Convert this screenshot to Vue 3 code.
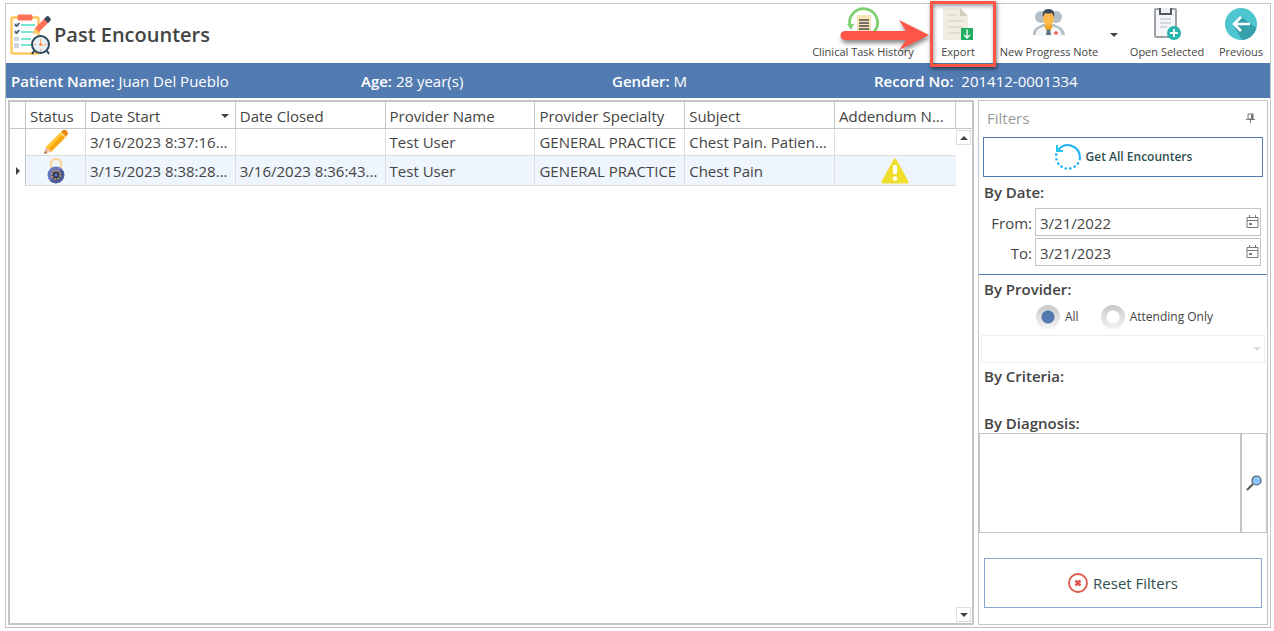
<script setup>
import { ref } from 'vue'

const patient = [
  { label: 'Patient Name:', value: 'Juan Del Pueblo' },
  { label: 'Age:', value: '28 year(s)' },
  { label: 'Gender:', value: 'M' },
  { label: 'Record No:', value: '\u00a0201412-0001334' },
]

const rows = [
  { status: 'open', start: '3/16/2023 8:37:16...', closed: '', provider: 'Test User', specialty: 'GENERAL PRACTICE', subject: 'Chest Pain. Patien...', addendum: false },
  { status: 'locked', start: '3/15/2023 8:38:28...', closed: '3/16/2023 8:36:43...', provider: 'Test User', specialty: 'GENERAL PRACTICE', subject: 'Chest Pain', addendum: true },
]

const selected = ref(1)
const from = ref('3/21/2022')
const to = ref('3/21/2023')
const scope = ref('all')
const diagnosis = ref('')
</script>

<template>
  <main class="window">
    <header class="header">
      <svg class="logo" viewBox="0 0 42 42" aria-hidden="true">
        <rect x="1.5" y="3.5" width="27" height="36" rx="1" fill="#fff" stroke="#fdc75b" stroke-width="2.4" />
        <rect x="7.500" y="0.500" width="15" height="6" rx="1.500" fill="#ff7058" />
        <g fill="#cdd6e0">
          <rect x="4" y="9" width="5" height="4" /><rect x="4" y="16" width="5" height="4" />
          <rect x="4" y="23" width="5" height="4" /><rect x="4" y="29" width="5" height="5" />
        </g>
        <path d="M5 10.500l1.500 1.500 3-3M5 17.500l1.500 1.500 3-3" fill="none" stroke="#324a5e" stroke-width="1.300" />
        <path d="M11 11h14M11 18h12M11 25h10M11 31h10" stroke="#4cdbc4" stroke-width="1.600" />
        <path d="M23 20l2-6 10-10 4 4-10 10z" fill="#ff7058" />
        <path d="M23 20l2-6 4 4z" fill="#ffd15c" />
        <path d="M34 5l3-3q3 0 4 4l-3 3z" fill="#324a5e" />
        <path d="M24 37l-2 3M37 37l2 3" stroke="#324a5e" stroke-width="2" />
        <circle cx="30.500" cy="30.500" r="8.500" fill="#e6f0f7" stroke="#324a5e" stroke-width="2" />
        <path d="M30.500 25v6h4" fill="none" stroke="#ffb347" stroke-width="1.200" />
        <g fill="#ff7058"><circle cx="30.500" cy="30.500" r="1.300" /><circle cx="25" cy="30.500" r=".7" /><circle cx="36" cy="30.500" r=".7" /><circle cx="30.500" cy="36" r=".7" /></g>
      </svg>
      <h1>Past Encounters</h1>

      <nav class="toolbar" aria-label="Encounter actions">
        <button class="tool history" type="button">
          <svg viewBox="0 0 32 34" aria-hidden="true">
            <rect x="10" y="8" width="14" height="18" fill="#fbe3b8" />
            <path d="M12 13h10M12 16h10M12 19h10M12 22h10" stroke="#4c4c4c" stroke-width="1.300" />
            <path d="M3 19A14 14 0 1 1 27 25" fill="none" stroke="#7ed070" stroke-width="2.800" />
            <path d="M0 17h7l-3 6z" fill="#7ed070" />
          </svg>
          <span>Clinical Task History</span>
        </button>
        <button class="tool export" type="button">
          <svg viewBox="0 0 32 34" aria-hidden="true">
            <path d="M1 1h17l8 8v24H1z" fill="#f0ede0" />
            <path d="M18 1l8 8h-8z" fill="#d3cfbb" />
            <path d="M6 8h8M6 14h15M6 20h15M6 26h12" stroke="#d5d1bf" stroke-width="1.200" />
            <rect x="19" y="21" width="12" height="12" fill="#22ae60" />
            <path d="M25 22.500v8M22 28l3 3 3-3" fill="none" stroke="#fff" stroke-width="1.300" />
          </svg>
          <span>Export</span>
          <i class="highlight"></i>
          <svg class="pointer" viewBox="0 0 92 36" aria-hidden="true">
            <path d="M6 13H67L60 2 90 17 60 32 67 22H6A4.500 4.500 0 0 1 6 13z" fill="#ff5547" />
          </svg>
        </button>
        <button class="tool progress" type="button">
          <svg viewBox="0 0 34 34" aria-hidden="true">
            <g fill="#b4bec7">
              <circle cx="9" cy="10" r="6" /><circle cx="24" cy="10" r="6" />
              <path d="M1 28q0-7 6-9l4-2h11l4 2q6 2 7 9z" />
            </g>
            <path d="M3 29q1-8 8-9l2-1h7l2 1q7 1 8 9z" fill="#f4f6f8" />
            <path d="M12 19l4.500 8 4.500-8z" fill="#f6a623" />
            <path d="M15 22h3l1 6h-5z" fill="#5d7380" />
            <path d="M13.500 14h6v6l-3 3-3-3z" fill="#f6a623" />
            <ellipse cx="16.500" cy="11.500" rx="5.500" ry="7" fill="#fdb94c" />
            <path d="M11 10Q9.500 2 16.500 2 23.500 2 22 10L20 6q-4 1-7 0z" fill="#3b4a57" />
            <path d="M22 26h4M24 24v4" stroke="#f2574b" stroke-width="1.400" />
          </svg>
          <span>New Progress Note</span>
        </button>
        <button class="more" type="button" aria-label="More note types"><i class="caret"></i></button>
        <button class="tool open" type="button">
          <svg viewBox="0 0 32 34" aria-hidden="true">
            <rect x="4" y="2" width="21" height="28" rx="1" fill="#f5f6f7" stroke="#9da1a5" stroke-width="2" />
            <path d="M9 1v6h11V1" fill="#eef0f1" stroke="#53585c" stroke-width="2" />
            <path d="M9 12h11M9 16h11M9 20h7" stroke="#b8bcc0" stroke-width="1.200" />
            <circle cx="23" cy="26" r="7" fill="#27b5ae" />
            <path d="M23 22v8M19 26h8" stroke="#fff" stroke-width="1.800" />
          </svg>
          <span>Open Selected</span>
        </button>
        <button class="tool previous" type="button">
          <svg viewBox="0 0 34 34" aria-hidden="true">
            <circle cx="17" cy="17" r="16" fill="#4fc5cf" />
            <path d="M17 10l15.500 11Q29 32 18 33L9 17z" fill="#359faa" />
            <path d="M26 17H10M17 10l-7 7 7 7" fill="none" stroke="#fff" stroke-width="2.600" />
          </svg>
          <span>Previous</span>
        </button>
      </nav>
    </header>

    <section class="patient">
      <div v-for="p in patient" :key="p.label"><b>{{ p.label }}</b> {{ p.value }}</div>
    </section>

    <div class="content">
      <section class="grid">
        <table>
          <colgroup>
            <col class="c-mark" /><col class="c-status" /><col /><col /><col /><col /><col /><col class="c-add" />
          </colgroup>
          <thead>
            <tr>
              <th></th>
              <th>Status</th>
              <th><div class="sort">Date Start<i class="caret"></i></div></th>
              <th>Date Closed</th>
              <th>Provider Name</th>
              <th>Provider Specialty</th>
              <th>Subject</th>
              <th>Addendum N...</th>
            </tr>
          </thead>
          <tbody>
            <tr v-for="(r, i) in rows" :key="i" :class="{ active: selected === i }" @click="selected = i">
              <td class="mark"><i v-if="selected === i" class="arrow"></i></td>
              <td class="icon">
                <svg v-if="r.status === 'open'" width="26" height="26" viewBox="0 0 26 26" role="img" aria-label="Open">
                  <path d="M1 25l2-7 4 5z" fill="#e8b79c" /><path d="M1 25l1-3 2 2z" fill="#b3654c" />
                  <path d="M3 18L18 3l5 5L8 23z" fill="#f7a80d" /><path d="M3 18L18 3l2 2L5 20z" fill="#fec935" />
                  <path d="M18 3l2-2q4-1 5 4l-2 3z" fill="#e78a10" /><path d="M17 4l1-1 5 5-1 1z" fill="#ffe28b" />
                </svg>
                <svg v-else width="20" height="26" viewBox="0 0 20 26" role="img" aria-label="Locked">
                  <path d="M5 12V6q0-5 5-5t5 5v6" fill="none" stroke="#fbd394" stroke-width="2" />
                  <circle cx="10" cy="17" r="8.500" fill="#6978be" />
                  <path d="M16 11A8.500 8.500 0 0 1 4 23z" fill="#4b5a94" />
                  <circle cx="10" cy="17" r="4.200" fill="#2b3c5c" stroke="#c99b52" stroke-width="1.600" stroke-dasharray="2 1.300" />
                  <circle cx="10" cy="17" r="1.400" fill="#6978be" />
                </svg>
              </td>
              <td>{{ r.start }}</td>
              <td>{{ r.closed }}</td>
              <td>{{ r.provider }}</td>
              <td>{{ r.specialty }}</td>
              <td>{{ r.subject }}</td>
              <td class="icon last">
                <svg v-if="r.addendum" width="28" height="26" viewBox="0 0 28 26" role="img" aria-label="Has addendum">
                  <path d="M14 2L26 24H2z" fill="#f0df2e" stroke="#f0df2e" stroke-width="3" stroke-linejoin="round" />
                  <rect x="12" y="7" width="4" height="9" rx="1" fill="#fff" /><circle cx="14" cy="20.500" r="2.300" fill="#fff" />
                </svg>
              </td>
            </tr>
          </tbody>
        </table>
        <div class="side">
          <div class="corner"></div>
          <div class="scroll">
            <button type="button" aria-label="Scroll up"><i class="caret up"></i></button>
            <button type="button" aria-label="Scroll down"><i class="caret"></i></button>
          </div>
        </div>
      </section>

      <aside class="filters">
        <div class="title">
          <h2>Filters</h2>
          <button type="button" aria-label="Pin panel">
            <svg width="9" height="10" viewBox="0 0 9 10"><path d="M2 1h5v5H2z" fill="none" stroke="#777" /><path d="M5 1h2v5H5zM0 6h9v1H0zM4 7h1v3H4z" fill="#777" /></svg>
          </button>
        </div>
        <button class="all" type="button">
          <svg width="28" height="28" viewBox="0 0 28 28" aria-hidden="true">
            <path d="M5 6Q11 0 18 3q8 3 8 12" fill="none" stroke="#1db0f6" stroke-width="2" />
            <path d="M26 15A12 12 0 1 1 3 9" fill="none" stroke="#1db0f6" stroke-width="2.200" stroke-dasharray="2.400 2.200" />
            <path d="M3 2v6h6" fill="none" stroke="#26c6f2" stroke-width="2" /><path d="M3 4v4h5z" fill="#26c6f2" />
          </svg>
          Get All Encounters
        </button>

        <h3 class="by-date">By Date:</h3>
        <div class="dates">
          <label for="from">From:</label>
          <div class="date">
            <input id="from" v-model="from" type="text" />
            <button type="button" aria-label="Choose start date">
              <svg width="13" height="14" viewBox="0 0 13 14"><path d="M1 2.500h11v10H1zM1 5.500h11M3.500 0v3M9.500 0v3" fill="none" stroke="#777" /><path d="M3 8h3v2H3z" fill="#777" /></svg>
            </button>
          </div>
          <label for="to">To:</label>
          <div class="date">
            <input id="to" v-model="to" type="text" />
            <button type="button" aria-label="Choose end date">
              <svg width="13" height="14" viewBox="0 0 13 14"><path d="M1 2.500h11v10H1zM1 5.500h11M3.500 0v3M9.500 0v3" fill="none" stroke="#777" /><path d="M3 8h3v2H3z" fill="#777" /></svg>
            </button>
          </div>
        </div>

        <h3 class="by-provider">By Provider:</h3>
        <div class="radios">
          <label><input v-model="scope" type="radio" name="scope" value="all" />All</label>
          <label><input v-model="scope" type="radio" name="scope" value="attending" />Attending Only</label>
        </div>
        <div class="provider">
          <select aria-label="Provider" disabled><option></option></select>
          <i class="caret"></i>
        </div>

        <h3 class="by-criteria">By Criteria:</h3>
        <h3 class="by-diagnosis"><label for="diagnosis">By Diagnosis:</label></h3>
        <div class="diagnosis">
          <textarea id="diagnosis" v-model="diagnosis"></textarea>
          <button type="button" aria-label="Search diagnosis">
            <svg width="16" height="16" viewBox="0 0 16 16"><path d="M1 15l6-6" stroke="#555" stroke-width="2" /><circle cx="10.500" cy="5.500" r="4.500" fill="#8fc4ff" stroke="#4a5668" stroke-width="1.200" /></svg>
          </button>
        </div>
        <button class="reset" type="button">
          <svg width="20" height="20" viewBox="0 0 20 20" aria-hidden="true"><circle cx="10" cy="10" r="9" fill="none" stroke="#e2574c" stroke-width="1.800" /><path d="M7.500 7.500l5 5M12.500 7.500l-5 5" stroke="#e2574c" stroke-width="2.600" /></svg>
          Reset Filters
        </button>
      </aside>
    </div>
  </main>
</template>

<style>
body { margin: 0; background: #fff; }
#app { display: flex; min-height: 100vh; }
</style>

<style scoped>
* { box-sizing: border-box; }
h1, h2, h3 { margin: 0; font-weight: 600; }
button { margin: 0; padding: 0; border: 0; background: none; font: inherit; color: inherit; }
svg { display: block; }
.window {
  flex: 1; display: flex; flex-direction: column; min-width: 0;
  margin: 3px 3px 3px 5px; border: 1px solid #c5c5c5;
  font-family: "Open Sans", "Noto Sans", sans-serif; font-size: 15px; line-height: 20px; color: #444;
}
.header { display: flex; align-items: center; height: 59px; padding: 2px 5px 0 4px; }
.logo { width: 42px; height: 42px; }
h1 { margin-left: 2px; font-size: 20px; line-height: 28px; }
.toolbar { display: flex; margin-left: auto; font-size: 11px; line-height: 16px; }
.tool { position: relative; display: flex; flex-direction: column; align-items: center; gap: 3px; height: 55px; white-space: nowrap; }
.tool > svg:not(.pointer) { width: 34px; height: 34px; }
.history { width: 106px; margin-right: 14px; }
.export { z-index: 2; width: 56px; margin-right: 10px; }
.progress { width: 106px; }
.more { width: 25px; padding-left: 8px; }
.open { width: 80px; margin-right: 10px; }
.previous { width: 48px; }
.caret { display: block; width: 0; height: 0; border: 4px solid transparent; border-top-color: #444; border-bottom: 0; }
.caret.up { border-top: 0; border-bottom: 4px solid #444; }
.highlight { position: absolute; left: 0; top: -6px; width: 66px; height: 66px; border: 3px solid #ff5547; box-shadow: 1px 2px 4px #0008, inset 1px 2px 4px #0006; }
.pointer { position: absolute; right: 55px; top: 11px; width: 92px; height: 36px; filter: drop-shadow(1px 3px 2px #0007); }

.patient {
  display: grid; grid-template-columns: 350fr 251fr 262fr 396fr; align-items: center;
  height: 35px; padding-left: 5px; background: #527bb1; color: #fff;
}
.patient b { font-weight: 600; }

.content { flex: 1; display: flex; gap: 4px; padding: 2px; }
.grid { flex: 1; display: flex; align-items: stretch; min-width: 0; border: 2px solid #c5c5c5; }
table { flex: 1; align-self: flex-start; width: 100%; min-width: 0; table-layout: fixed; border-collapse: separate; border-spacing: 0; }
.c-mark { width: 16px; }
.c-status { width: 60px; }
.c-add { width: 121px; }
th { height: 27px; padding: 1px 4px 0; border-right: 1px solid #c5c5c5; border-bottom: 1px solid #c5c5c5; font-weight: 400; text-align: left; white-space: nowrap; }
td { height: 27px; padding: 0 4px; border-right: 1px solid #ddd; border-bottom: 1px solid #ddd; white-space: nowrap; overflow: hidden; }
tr.active td { height: 30px; background: #eef5fc; }
tbody tr td.mark { padding: 0 0 0 6px; border-bottom: 0; border-right-color: #c5c5c5; background: none; }
td.icon { padding: 0; }
td.icon svg { margin: 0 auto; }
td.last { border-right-color: transparent; }
.sort { display: flex; justify-content: space-between; align-items: center; padding-right: 2px; }
.arrow { display: block; width: 0; height: 0; border: 4px solid transparent; border-left-color: #444; border-right: 0; }
.side { flex: none; display: flex; flex-direction: column; width: 16px; }
.corner { height: 27px; border-bottom: 1px solid #c5c5c5; }
.scroll { flex: 1; display: flex; flex-direction: column; justify-content: space-between; padding: 1px 1px 1px 0; }
.scroll button { display: flex; align-items: center; justify-content: center; height: 15px; border: 1px solid #ddd; background: #fff; }

.filters { display: flex; flex-direction: column; width: 290px; border: 1px solid #c5c5c5; }
.title { display: flex; align-items: center; justify-content: space-between; height: 36px; padding: 0 12px 2px 8px; }
h2 { font-size: 15px; font-weight: 400; color: #999; }
.all {
  display: flex; align-items: center; justify-content: center; gap: 4px; height: 40px; margin: 0 4px;
  border: 1px solid #527bb1; color: #2f4f4f; font-size: 12px; font-weight: 600;
}
h3 { padding-left: 5px; font-size: 15px; }
.by-date { line-height: 31px; }
.dates { display: grid; grid-template-columns: 53px 1fr; column-gap: 3px; row-gap: 2px; align-items: center; padding: 0 6px 8px 0; border-bottom: 1px solid #527bb1; }
.dates label { padding-top: 2px; text-align: right; }
.date { display: flex; align-items: center; height: 28px; padding-right: 1px; border: 1px solid #c5c5c5; }
.date input { flex: 1; min-width: 0; height: 26px; padding: 2px 4px 0; border: 0; outline: 0; background: none; font: inherit; color: inherit; }
.by-provider { padding-bottom: 2px; line-height: 28px; }
.radios { display: flex; gap: 22px; height: 24px; padding-left: 57px; font-size: 12px; }
.radios label { display: flex; align-items: center; gap: 5px; }
.radios input { appearance: none; width: 24px; height: 24px; margin: 0; border-radius: 50%; background: radial-gradient(circle, #fff 6px, transparent 7px), linear-gradient(#c8c8c8, #f4f4f4); }
.radios input:checked { background: radial-gradient(circle, #527bb1 6px, transparent 7px), linear-gradient(#c8c8c8, #f4f4f4); }
.provider { position: relative; margin: 6px 2px 0; }
.provider select { display: block; appearance: none; width: 100%; height: 28px; border: 1px solid #e8e8e8; border-radius: 0; background: #fff; }
.provider .caret { position: absolute; right: 4px; top: 12px; border-top-color: #ddd; }
.by-criteria { padding-bottom: 2px; line-height: 26px; }
.by-diagnosis { margin-top: 24px; padding-bottom: 2px; line-height: 16px; }
.diagnosis { display: flex; height: 100px; border: 1px solid #c5c5c5; }
.diagnosis textarea { flex: 1; min-width: 0; resize: none; border: 0; outline: 0; font: inherit; color: inherit; }
.diagnosis button { display: flex; align-items: center; justify-content: center; width: 26px; border-left: 2px solid #c5c5c5; }
.reset {
  display: flex; align-items: center; justify-content: center; gap: 5px; height: 50px; margin: 25px 5px 0;
  border: 1px solid #86a8d0; color: #2f4f4f;
}
</style>
